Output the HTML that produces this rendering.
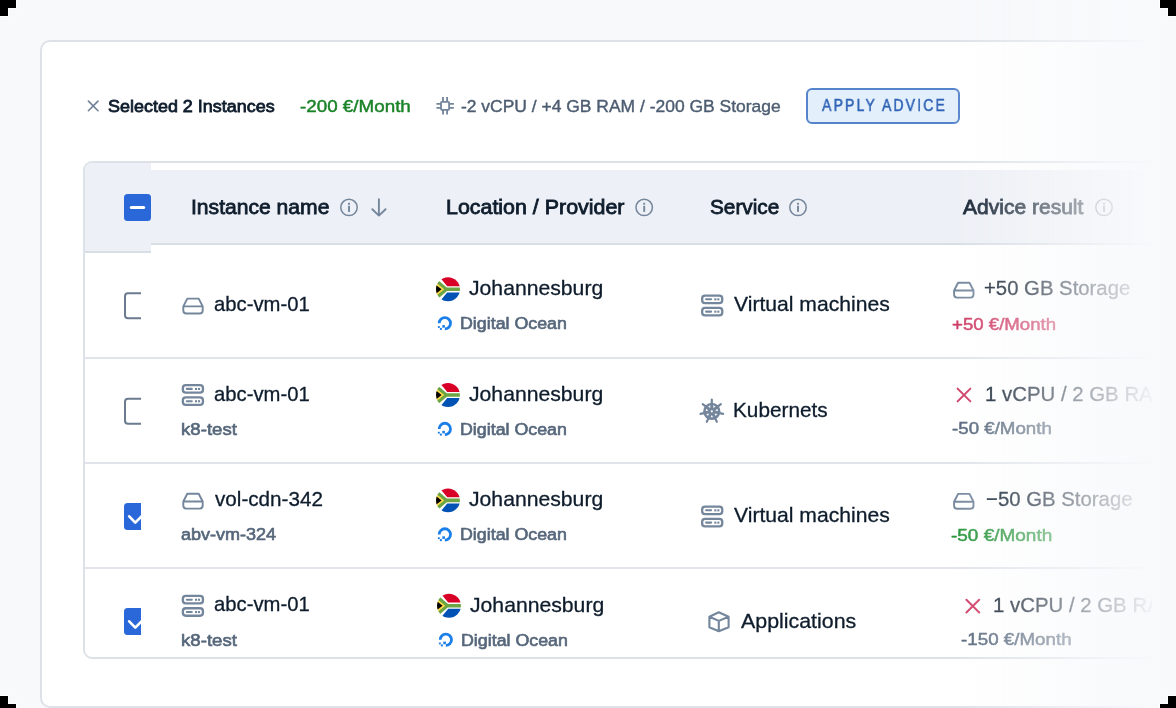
<!DOCTYPE html>
<html><head><meta charset="utf-8"><style>
html,body{margin:0;padding:0;width:1176px;height:708px;overflow:hidden;background:#f8f9fb;font-family:"Liberation Sans",sans-serif}
.t{position:absolute;white-space:nowrap;line-height:1;will-change:transform}
.abs{position:absolute}
</style></head><body>
<div class="abs" style="left:0;top:0;width:1144px;height:708px;overflow:hidden">
<div class="abs" style="left:40px;top:40px;width:1200px;height:668px;box-sizing:border-box;background:#fff;border:2px solid #dee2e8;border-radius:10px"></div>
</div>
<div class="abs" style="left:806px;top:88px;width:154px;height:35.5px;box-sizing:border-box;background:#e4effc;border:2px solid #5584cc;border-radius:6px"></div>
<div class="abs" style="left:0;top:0;width:1152px;height:708px;overflow:hidden">
<div class="abs" style="left:83px;top:161px;width:1200px;height:498px;box-sizing:border-box;background:#fff;border:2px solid #dde2e8;border-radius:9px;overflow:hidden">
  <div class="abs" style="left:0;top:0;width:66px;height:88px;background:#edf0f6;border-bottom:2px solid #d9dee5"></div>
  <div class="abs" style="left:66px;top:7px;width:1200px;height:73px;background:#edf0f6;border-bottom:2px solid #d9dee5"></div>
  <div class="abs" style="left:0;top:194px;width:1200px;height:2px;background:#e1e5eb"></div>
  <div class="abs" style="left:0;top:299px;width:1200px;height:2px;background:#e1e5eb"></div>
  <div class="abs" style="left:0;top:404px;width:1200px;height:2px;background:#e1e5eb"></div>
</div>
</div>
<div class="abs" style="left:0;top:0;width:1152px;height:708px;overflow:hidden"><div class="t" style="left:108.10px;top:98.00px;font-size:17.40px;font-weight:400;color:#0e1c2c;-webkit-text-stroke:0.8px #0e1c2c;transform:scaleX(1.0326);transform-origin:0 0;">Selected 2 Instances</div><div class="t" style="left:299.97px;top:98.00px;font-size:17.40px;font-weight:400;color:#1a8328;-webkit-text-stroke:0.45px #1a8328;transform:scaleX(1.0814);transform-origin:0 0;">-200 €/Month</div><div class="t" style="left:460.50px;top:98.00px;font-size:17.40px;font-weight:400;color:#4d5d71;-webkit-text-stroke:0.4px #4d5d71;transform:scaleX(1.0038);transform-origin:0 0;">-2 vCPU / +4 GB RAM / -200 GB Storage</div><div class="t" style="left:821.75px;top:97.00px;font-size:16.30px;font-weight:400;color:#2f63b5;-webkit-text-stroke:0.5px #2f63b5;transform:scaleX(0.8600);transform-origin:0 0;letter-spacing:2.517px;">APPLY ADVICE</div><div class="t" style="left:190.70px;top:197.00px;font-size:20.60px;font-weight:400;color:#0e1c2c;-webkit-text-stroke:0.8px #0e1c2c;transform:scaleX(1.0245);transform-origin:0 0;">Instance name</div><div class="t" style="left:445.79px;top:197.00px;font-size:20.60px;font-weight:400;color:#0e1c2c;-webkit-text-stroke:0.8px #0e1c2c;transform:scaleX(1.0392);transform-origin:0 0;">Location / Provider</div><div class="t" style="left:710.26px;top:197.00px;font-size:20.60px;font-weight:400;color:#0e1c2c;-webkit-text-stroke:0.8px #0e1c2c;transform:scaleX(1.0083);transform-origin:0 0;">Service</div><div class="t" style="left:963.10px;top:197.00px;font-size:20.60px;font-weight:400;color:#0e1c2c;-webkit-text-stroke:0.8px #0e1c2c;transform:scaleX(1.0209);transform-origin:0 0;">Advice result</div><div class="t" style="left:214.04px;top:294.00px;font-size:20.26px;font-weight:400;color:#0e1c2c;-webkit-text-stroke:0.3px #0e1c2c;">abc-vm-01</div><div class="t" style="left:469.23px;top:278.00px;font-size:20.60px;font-weight:400;color:#0e1c2c;-webkit-text-stroke:0.3px #0e1c2c;transform:scaleX(1.0283);transform-origin:0 0;">Johannesburg</div><div class="t" style="left:459.90px;top:315.00px;font-size:17.20px;font-weight:400;color:#56677b;-webkit-text-stroke:0.65px #56677b;transform:scaleX(1.0363);transform-origin:0 0;">Digital Ocean</div><div class="t" style="left:733.74px;top:294.00px;font-size:20.60px;font-weight:400;color:#0e1c2c;-webkit-text-stroke:0.3px #0e1c2c;transform:scaleX(1.0252);transform-origin:0 0;">Virtual machines</div><div class="t" style="left:984.13px;top:278.00px;font-size:20.32px;font-weight:400;color:#0e1c2c;-webkit-text-stroke:0.3px #0e1c2c;">+50 GB Storage</div><div class="t" style="left:952.12px;top:316.00px;font-size:17.20px;font-weight:400;color:#cf3a63;-webkit-text-stroke:0.5px #cf3a63;transform:scaleX(1.0841);transform-origin:0 0;">+50 €/Month</div><div class="t" style="left:214.04px;top:384.00px;font-size:20.26px;font-weight:400;color:#0e1c2c;-webkit-text-stroke:0.3px #0e1c2c;">abc-vm-01</div><div class="t" style="left:180.82px;top:421.00px;font-size:17.20px;font-weight:400;color:#56677b;-webkit-text-stroke:0.65px #56677b;transform:scaleX(1.0841);transform-origin:0 0;">k8-test</div><div class="t" style="left:469.23px;top:384.00px;font-size:20.60px;font-weight:400;color:#0e1c2c;-webkit-text-stroke:0.3px #0e1c2c;transform:scaleX(1.0283);transform-origin:0 0;">Johannesburg</div><div class="t" style="left:459.90px;top:421.00px;font-size:17.20px;font-weight:400;color:#56677b;-webkit-text-stroke:0.65px #56677b;transform:scaleX(1.0363);transform-origin:0 0;">Digital Ocean</div><div class="t" style="left:732.69px;top:400.00px;font-size:20.60px;font-weight:400;color:#0e1c2c;-webkit-text-stroke:0.3px #0e1c2c;transform:scaleX(1.0080);transform-origin:0 0;">Kubernets</div><div class="t" style="left:984.82px;top:384.00px;font-size:20.40px;font-weight:400;color:#0e1c2c;-webkit-text-stroke:0.3px #0e1c2c;">1 vCPU / 2 GB RAM</div><div class="t" style="left:952.30px;top:420.00px;font-size:17.20px;font-weight:400;color:#56677b;-webkit-text-stroke:0.5px #56677b;transform:scaleX(1.0883);transform-origin:0 0;">-50 €/Month</div><div class="t" style="left:214.85px;top:489.00px;font-size:20.60px;font-weight:400;color:#0e1c2c;-webkit-text-stroke:0.3px #0e1c2c;transform:scaleX(1.0027);transform-origin:0 0;">vol-cdn-342</div><div class="t" style="left:181.40px;top:526.00px;font-size:17.20px;font-weight:400;color:#56677b;-webkit-text-stroke:0.65px #56677b;transform:scaleX(1.0484);transform-origin:0 0;">abv-vm-324</div><div class="t" style="left:469.23px;top:489.00px;font-size:20.60px;font-weight:400;color:#0e1c2c;-webkit-text-stroke:0.3px #0e1c2c;transform:scaleX(1.0283);transform-origin:0 0;">Johannesburg</div><div class="t" style="left:459.90px;top:526.00px;font-size:17.20px;font-weight:400;color:#56677b;-webkit-text-stroke:0.65px #56677b;transform:scaleX(1.0363);transform-origin:0 0;">Digital Ocean</div><div class="t" style="left:733.74px;top:505.00px;font-size:20.60px;font-weight:400;color:#0e1c2c;-webkit-text-stroke:0.3px #0e1c2c;transform:scaleX(1.0252);transform-origin:0 0;">Virtual machines</div><div class="t" style="left:985.63px;top:489.00px;font-size:20.37px;font-weight:400;color:#0e1c2c;-webkit-text-stroke:0.3px #0e1c2c;">−50 GB Storage</div><div class="t" style="left:951.29px;top:527.00px;font-size:17.20px;font-weight:400;color:#27953a;-webkit-text-stroke:0.5px #27953a;transform:scaleX(1.1039);transform-origin:0 0;">-50 €/Month</div><div class="t" style="left:214.04px;top:594.00px;font-size:20.26px;font-weight:400;color:#0e1c2c;-webkit-text-stroke:0.3px #0e1c2c;">abc-vm-01</div><div class="t" style="left:180.82px;top:632.00px;font-size:17.20px;font-weight:400;color:#56677b;-webkit-text-stroke:0.65px #56677b;transform:scaleX(1.0841);transform-origin:0 0;">k8-test</div><div class="t" style="left:470.23px;top:595.00px;font-size:20.60px;font-weight:400;color:#0e1c2c;-webkit-text-stroke:0.3px #0e1c2c;transform:scaleX(1.0283);transform-origin:0 0;">Johannesburg</div><div class="t" style="left:460.90px;top:632.00px;font-size:17.20px;font-weight:400;color:#56677b;-webkit-text-stroke:0.65px #56677b;transform:scaleX(1.0363);transform-origin:0 0;">Digital Ocean</div><div class="t" style="left:740.75px;top:611.00px;font-size:20.60px;font-weight:400;color:#0e1c2c;-webkit-text-stroke:0.3px #0e1c2c;transform:scaleX(1.0379);transform-origin:0 0;">Applications</div><div class="t" style="left:993.02px;top:595.00px;font-size:20.40px;font-weight:400;color:#0e1c2c;-webkit-text-stroke:0.3px #0e1c2c;">1 vCPU / 2 GB RAM</div><div class="t" style="left:960.75px;top:631.00px;font-size:17.20px;font-weight:400;color:#56677b;-webkit-text-stroke:0.5px #56677b;transform:scaleX(1.0920);transform-origin:0 0;">-150 €/Month</div></div>
<svg class="abs" style="left:0;top:0" width="1176" height="708" viewBox="0 0 1176 708"><path d="M88.4,101.10000000000001L98.0,110.7M98.0,101.10000000000001L88.4,110.7" stroke="#6f8198" stroke-width="1.6" stroke-linecap="round"/><rect x="441" y="101.9" width="8.1" height="7.9" rx="0.8" fill="none" stroke="#74869c" stroke-width="1.85"/><path d="M443,97.1V101.9 M447.1,97.1V101.9 M443,109.8V114.4 M447.1,109.8V114.4 M436.4,103.9H441 M436.4,107.9H441 M449.1,103.9H453.9 M449.1,107.9H453.9" stroke="#74869c" stroke-width="1.85"/><circle cx="349" cy="207.4" r="8.2" fill="none" stroke="#74869c" stroke-width="1.5"/><rect x="348.05" y="202.8" width="1.9" height="1.9" fill="#74869c"/><rect x="348.05" y="205.8" width="1.9" height="6.1" fill="#74869c"/><path d="M378.9,199.2V215.2 M372.3,209.2L378.9,215.6L385.6,209.2" fill="none" stroke="#74869c" stroke-width="1.9" stroke-linecap="round" stroke-linejoin="round"/><circle cx="644.2" cy="207.4" r="8.2" fill="none" stroke="#74869c" stroke-width="1.5"/><rect x="643.25" y="202.8" width="1.9" height="1.9" fill="#74869c"/><rect x="643.25" y="205.8" width="1.9" height="6.1" fill="#74869c"/><circle cx="798" cy="207.4" r="8.2" fill="none" stroke="#74869c" stroke-width="1.5"/><rect x="797.05" y="202.8" width="1.9" height="1.9" fill="#74869c"/><rect x="797.05" y="205.8" width="1.9" height="6.1" fill="#74869c"/><circle cx="1104" cy="207.4" r="8.2" fill="none" stroke="#74869c" stroke-width="1.5"/><rect x="1103.05" y="202.8" width="1.9" height="1.9" fill="#74869c"/><rect x="1103.05" y="205.8" width="1.9" height="6.1" fill="#74869c"/><path d="M187.30,298.60 L198.70,298.60 L202.70,306.40 L202.70,310.50 Q202.70,313.50 199.70,313.50 L186.30,313.50 Q183.30,313.50 183.30,310.50 L183.30,306.40 Z M183.30,306.40 L202.70,306.40" fill="none" stroke="#74869c" stroke-width="1.9" stroke-linejoin="round"/><rect x="182.85" y="385.15" width="20.1" height="7.5" rx="2.9" fill="none" stroke="#74869c" stroke-width="2.3"/><path d="M186.80,388.90 H191.80" stroke="#74869c" stroke-width="2.1" stroke-linecap="round"/><rect x="195.00" y="387.90" width="2.1" height="2.1" fill="#74869c"/><rect x="198.00" y="387.90" width="2.1" height="2.1" fill="#74869c"/><rect x="182.85" y="397.45" width="20.1" height="7.5" rx="2.9" fill="none" stroke="#74869c" stroke-width="2.3"/><path d="M186.80,401.20 H191.80" stroke="#74869c" stroke-width="2.1" stroke-linecap="round"/><rect x="195.00" y="400.20" width="2.1" height="2.1" fill="#74869c"/><rect x="198.00" y="400.20" width="2.1" height="2.1" fill="#74869c"/><path d="M187.30,493.70 L198.70,493.70 L202.70,501.50 L202.70,505.60 Q202.70,508.60 199.70,508.60 L186.30,508.60 Q183.30,508.60 183.30,505.60 L183.30,501.50 Z M183.30,501.50 L202.70,501.50" fill="none" stroke="#74869c" stroke-width="1.9" stroke-linejoin="round"/><rect x="182.85" y="595.95" width="20.1" height="7.5" rx="2.9" fill="none" stroke="#74869c" stroke-width="2.3"/><path d="M186.80,599.70 H191.80" stroke="#74869c" stroke-width="2.1" stroke-linecap="round"/><rect x="195.00" y="598.70" width="2.1" height="2.1" fill="#74869c"/><rect x="198.00" y="598.70" width="2.1" height="2.1" fill="#74869c"/><rect x="182.85" y="608.25" width="20.1" height="7.5" rx="2.9" fill="none" stroke="#74869c" stroke-width="2.3"/><path d="M186.80,612.00 H191.80" stroke="#74869c" stroke-width="2.1" stroke-linecap="round"/><rect x="195.00" y="611.00" width="2.1" height="2.1" fill="#74869c"/><rect x="198.00" y="611.00" width="2.1" height="2.1" fill="#74869c"/><rect x="702.15" y="295.55" width="20.1" height="7.5" rx="2.9" fill="none" stroke="#74869c" stroke-width="2.3"/><path d="M706.10,299.30 H711.10" stroke="#74869c" stroke-width="2.1" stroke-linecap="round"/><rect x="714.30" y="298.30" width="2.1" height="2.1" fill="#74869c"/><rect x="717.30" y="298.30" width="2.1" height="2.1" fill="#74869c"/><rect x="702.15" y="307.85" width="20.1" height="7.5" rx="2.9" fill="none" stroke="#74869c" stroke-width="2.3"/><path d="M706.10,311.60 H711.10" stroke="#74869c" stroke-width="2.1" stroke-linecap="round"/><rect x="714.30" y="310.60" width="2.1" height="2.1" fill="#74869c"/><rect x="717.30" y="310.60" width="2.1" height="2.1" fill="#74869c"/><circle cx="711.8" cy="411.3" r="8.6" fill="#74869c"/><path d="M711.80,404.30L711.80,399.70" stroke="#74869c" stroke-width="2.2" stroke-linecap="round"/><path d="M717.27,406.94L720.87,404.07" stroke="#74869c" stroke-width="2.2" stroke-linecap="round"/><path d="M718.62,412.86L723.11,413.88" stroke="#74869c" stroke-width="2.2" stroke-linecap="round"/><path d="M714.84,417.61L716.83,421.75" stroke="#74869c" stroke-width="2.2" stroke-linecap="round"/><path d="M708.76,417.61L706.77,421.75" stroke="#74869c" stroke-width="2.2" stroke-linecap="round"/><path d="M704.98,412.86L700.49,413.88" stroke="#74869c" stroke-width="2.2" stroke-linecap="round"/><path d="M706.33,406.94L702.73,404.07" stroke="#74869c" stroke-width="2.2" stroke-linecap="round"/><polygon points="713.36,408.06 713.25,405.37 715.53,406.47" fill="#fff"/><polygon points="715.31,410.50 717.33,408.74 717.90,411.21" fill="#fff"/><polygon points="714.61,413.54 717.26,414.03 715.67,416.01" fill="#fff"/><polygon points="711.80,414.90 713.07,417.27 710.53,417.27" fill="#fff"/><polygon points="708.99,413.54 707.93,416.01 706.34,414.03" fill="#fff"/><polygon points="708.29,410.50 705.70,411.21 706.27,408.74" fill="#fff"/><polygon points="710.24,408.06 708.07,406.47 710.35,405.37" fill="#fff"/><circle cx="711.8" cy="411.3" r="1.1" fill="#fff"/><rect x="702.15" y="506.55" width="20.1" height="7.5" rx="2.9" fill="none" stroke="#74869c" stroke-width="2.3"/><path d="M706.10,510.30 H711.10" stroke="#74869c" stroke-width="2.1" stroke-linecap="round"/><rect x="714.30" y="509.30" width="2.1" height="2.1" fill="#74869c"/><rect x="717.30" y="509.30" width="2.1" height="2.1" fill="#74869c"/><rect x="702.15" y="518.85" width="20.1" height="7.5" rx="2.9" fill="none" stroke="#74869c" stroke-width="2.3"/><path d="M706.10,522.60 H711.10" stroke="#74869c" stroke-width="2.1" stroke-linecap="round"/><rect x="714.30" y="521.60" width="2.1" height="2.1" fill="#74869c"/><rect x="717.30" y="521.60" width="2.1" height="2.1" fill="#74869c"/><path d="M718.80,612.30 L728.60,616.70 L728.60,627.20 L718.80,631.30 L709.40,627.20 L709.40,616.70 Z M709.40,616.70 L718.80,620.90 L728.60,616.70 M718.80,620.90 L718.80,631.30" fill="none" stroke="#74869c" stroke-width="2.1" stroke-linejoin="round"/><path d="M958.10,282.70 L969.50,282.70 L973.50,290.50 L973.50,294.60 Q973.50,297.60 970.50,297.60 L957.10,297.60 Q954.10,297.60 954.10,294.60 L954.10,290.50 Z M954.10,290.50 L973.50,290.50" fill="none" stroke="#74869c" stroke-width="1.9" stroke-linejoin="round"/><path d="M957.6,388.6L970.4,401.4M970.4,388.6L957.6,401.4" stroke="#cf3a63" stroke-width="2.0" stroke-linecap="round"/><path d="M958.10,493.90 L969.50,493.90 L973.50,501.70 L973.50,505.80 Q973.50,508.80 970.50,508.80 L957.10,508.80 Q954.10,508.80 954.10,505.80 L954.10,501.70 Z M954.10,501.70 L973.50,501.70" fill="none" stroke="#74869c" stroke-width="1.9" stroke-linejoin="round"/><path d="M966.4,599.7L979.1999999999999,612.5M979.1999999999999,599.7L966.4,612.5" stroke="#cf3a63" stroke-width="2.0" stroke-linecap="round"/><clipPath id="fc0"><circle cx="12" cy="12" r="11.95"/></clipPath><g clip-path="url(#fc0)" transform="translate(436.00,277.30)"><rect width="24" height="24" fill="#fff"/><polygon points="3,-1 25,-1 25,8.9 11.2,8.9" fill="#d80027"/><polygon points="3,25 25,25 25,15.1 11.2,15.1" fill="#0052b4"/><path d="M-1,2.5 L10.2,12 L25,12 M-1,21.5 L10.2,12" fill="none" stroke="#6da544" stroke-width="3.6"/><polygon points="-1,4.6 8.2,12 -1,19.4" fill="#ffda44"/><polygon points="-1,6.8 5.6,12 -1,17.2" fill="#000"/></g><path d="M439.20,323.20 A5.65,5.65 0 1 1 444.85,328.85" fill="none" stroke="#1b7fe9" stroke-width="2.8"/><rect x="442.30" y="325.10" width="2.6" height="2.6" fill="#1b7fe9"/><rect x="439.90" y="327.90" width="2.0" height="2.0" fill="#1b7fe9"/><rect x="437.90" y="326.10" width="1.9" height="1.8" fill="#1b7fe9"/><clipPath id="fc1"><circle cx="12" cy="12" r="11.95"/></clipPath><g clip-path="url(#fc1)" transform="translate(436.00,383.00)"><rect width="24" height="24" fill="#fff"/><polygon points="3,-1 25,-1 25,8.9 11.2,8.9" fill="#d80027"/><polygon points="3,25 25,25 25,15.1 11.2,15.1" fill="#0052b4"/><path d="M-1,2.5 L10.2,12 L25,12 M-1,21.5 L10.2,12" fill="none" stroke="#6da544" stroke-width="3.6"/><polygon points="-1,4.6 8.2,12 -1,19.4" fill="#ffda44"/><polygon points="-1,6.8 5.6,12 -1,17.2" fill="#000"/></g><path d="M439.20,428.90 A5.65,5.65 0 1 1 444.85,434.55" fill="none" stroke="#1b7fe9" stroke-width="2.8"/><rect x="442.30" y="430.80" width="2.6" height="2.6" fill="#1b7fe9"/><rect x="439.90" y="433.60" width="2.0" height="2.0" fill="#1b7fe9"/><rect x="437.90" y="431.80" width="1.9" height="1.8" fill="#1b7fe9"/><clipPath id="fc2"><circle cx="12" cy="12" r="11.95"/></clipPath><g clip-path="url(#fc2)" transform="translate(436.00,488.40)"><rect width="24" height="24" fill="#fff"/><polygon points="3,-1 25,-1 25,8.9 11.2,8.9" fill="#d80027"/><polygon points="3,25 25,25 25,15.1 11.2,15.1" fill="#0052b4"/><path d="M-1,2.5 L10.2,12 L25,12 M-1,21.5 L10.2,12" fill="none" stroke="#6da544" stroke-width="3.6"/><polygon points="-1,4.6 8.2,12 -1,19.4" fill="#ffda44"/><polygon points="-1,6.8 5.6,12 -1,17.2" fill="#000"/></g><path d="M439.20,534.40 A5.65,5.65 0 1 1 444.85,540.05" fill="none" stroke="#1b7fe9" stroke-width="2.8"/><rect x="442.30" y="536.30" width="2.6" height="2.6" fill="#1b7fe9"/><rect x="439.90" y="539.10" width="2.0" height="2.0" fill="#1b7fe9"/><rect x="437.90" y="537.30" width="1.9" height="1.8" fill="#1b7fe9"/><clipPath id="fc3"><circle cx="12" cy="12" r="11.95"/></clipPath><g clip-path="url(#fc3)" transform="translate(437.00,593.70)"><rect width="24" height="24" fill="#fff"/><polygon points="3,-1 25,-1 25,8.9 11.2,8.9" fill="#d80027"/><polygon points="3,25 25,25 25,15.1 11.2,15.1" fill="#0052b4"/><path d="M-1,2.5 L10.2,12 L25,12 M-1,21.5 L10.2,12" fill="none" stroke="#6da544" stroke-width="3.6"/><polygon points="-1,4.6 8.2,12 -1,19.4" fill="#ffda44"/><polygon points="-1,6.8 5.6,12 -1,17.2" fill="#000"/></g><path d="M440.20,639.70 A5.65,5.65 0 1 1 445.85,645.35" fill="none" stroke="#1b7fe9" stroke-width="2.8"/><rect x="443.30" y="641.60" width="2.6" height="2.6" fill="#1b7fe9"/><rect x="440.90" y="644.40" width="2.0" height="2.0" fill="#1b7fe9"/><rect x="438.90" y="642.60" width="1.9" height="1.8" fill="#1b7fe9"/><rect x="124" y="194" width="27" height="27" rx="3.5" fill="#2a68d9"/><path d="M131.3,207.5H143.7" stroke="#fff" stroke-width="3" stroke-linecap="round"/><clipPath id="cbc"><rect x="84" y="250" width="57" height="420"/></clipPath><g clip-path="url(#cbc)"><rect x="125" y="293.2" width="25" height="25" rx="3" fill="none" stroke="#6b7b90" stroke-width="2"/><rect x="125" y="398.7" width="25" height="25" rx="3" fill="none" stroke="#6b7b90" stroke-width="2"/><rect x="124" y="503.0" width="27" height="27" rx="3.5" fill="#2a68d9"/><path d="M129.2,516.3 L135.3,522.6 L143.5,514.4" fill="none" stroke="#fff" stroke-width="2.6" stroke-linecap="round" stroke-linejoin="round"/><rect x="124" y="608.0" width="27" height="27" rx="3.5" fill="#2a68d9"/><path d="M129.2,621.3 L135.3,627.6 L143.5,619.4" fill="none" stroke="#fff" stroke-width="2.6" stroke-linecap="round" stroke-linejoin="round"/></g></svg>
<div class="abs" style="left:0;top:0;width:1176px;height:708px;background:linear-gradient(to right, rgba(248,249,251,0) 950px, rgba(248,249,251,1) 1158px)"></div>
<svg class="abs" style="left:0;top:0" width="1176" height="708" viewBox="0 0 1176 708">
<g fill="#000" stroke="#fff" stroke-width="2" paint-order="stroke">
<path d="M0,0H16V8H8V16H0Z"/>
<path d="M1176,0H1160V8H1168V16H1176Z"/>
<path d="M0,708V704H16V708ZM0,704V696H8V704Z"/>
<path d="M1176,708V704H1160V708ZM1176,704V696H1168V704Z"/>
</g>
<g fill="#000">
<path d="M0,0H16V8H8V16H0Z"/>
<path d="M1176,0H1160V8H1168V16H1176Z"/>
<path d="M0,696H8V704H16V708H0Z"/>
<path d="M1176,696H1168V704H1160V708H1176Z"/>
</g>
</svg>
</body></html>
